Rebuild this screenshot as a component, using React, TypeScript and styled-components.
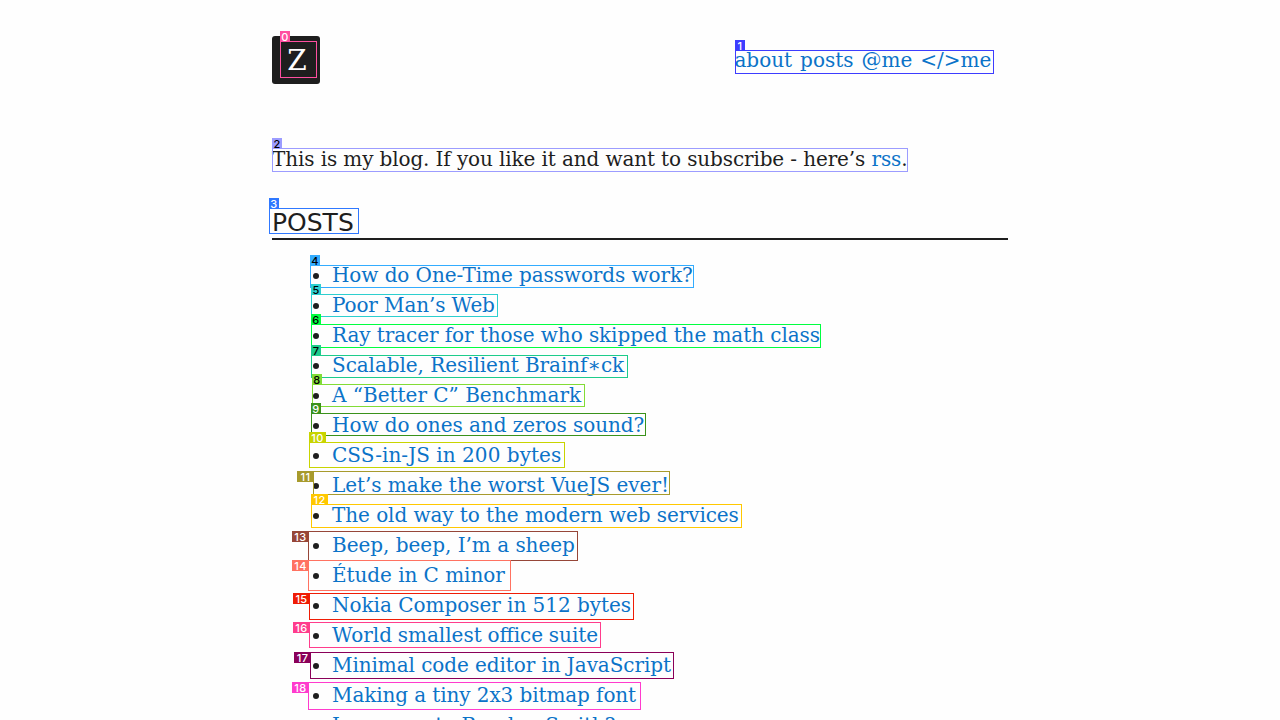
import React from "react";
import styled, { createGlobalStyle } from "styled-components";

const Global = createGlobalStyle`
  * { box-sizing: border-box; }
  html, body { margin: 0; height: 720px; overflow: hidden; background: #fefefe; }
  body {
    font: 20px/30px "DejaVu Serif", serif;
    color: #1e1e1e;
  }
`;

const Page = styled.main`
  position: relative;
  width: 1280px;
  height: 720px;
  overflow: hidden;
  padding: 36px 272px 0;
`;
const Header = styled.header`
  display: flex;
  justify-content: space-between;
  align-items: center;
  height: 48px;
`;
const Logo = styled.a`
  display: flex;
  align-items: center;
  justify-content: center;
  width: 48px;
  height: 48px;
  padding: 1px 0 0 2px;
  border-radius: 3px;
  background: #1e1e1e;
  color: #fefefe;
  font-size: 28px;
`;
const Nav = styled.nav`
  display: flex;
  gap: 8px;
  padding-right: 16.6px;
`;
const Link = styled.a`
  color: #0b73c8;
  text-decoration: none;
`;
const Intro = styled.p`
  margin: 60px 0 32px;
  letter-spacing: -0.121px;
`;
const Title = styled.h2`
  margin: 0;
  height: 34px;
  padding-top: 1px;
  border-bottom: 2px solid #1e1e1e;
  font: 400 25px/32px "DejaVu Sans", sans-serif;
`;
const Posts = styled.ul`
  margin: 20px 0 0;
  padding-left: 60px;
`;
const Post = styled.li<{ $track: number; $word?: number }>`
  height: 30px;
  white-space: nowrap;
  letter-spacing: ${(p) => (p.$track ? `${p.$track}px` : "normal")};
  word-spacing: ${(p) => p.$word ?? 0}px;
`;

const Outline = styled.div<{ $x: number; $y: number; $w: number; $h: number; $c: string }>`
  position: absolute;
  left: ${(p) => p.$x}px;
  top: ${(p) => p.$y}px;
  width: ${(p) => p.$w}px;
  height: ${(p) => p.$h}px;
  border: 1px solid ${(p) => p.$c};
`;
const Tag = styled.span<{ $x: number; $y: number; $w: number; $c: string; $dark?: boolean }>`
  position: absolute;
  left: ${(p) => p.$x}px;
  top: ${(p) => p.$y}px;
  width: ${(p) => p.$w}px;
  height: 11px;
  background: ${(p) => p.$c};
  color: ${(p) => (p.$dark ? "#000" : "#fff")};
  font: 500 11px/12px Inter, sans-serif;
  letter-spacing: 0.4px;
  text-align: center;
`;

// [title, letter spacing, word spacing]
const posts: [string, number, number?][] = [
  ["How do One-Time passwords work?", -0.08],
  ["Poor Man’s Web", -0.12],
  ["Ray tracer for those who skipped the math class", -0.075],
  ["Scalable, Resilient Brainf∗ck", -0.07],
  ["A “Better C” Benchmark", -0.01],
  ["How do ones and zeros sound?", -0.05],
  ["CSS-in-JS in 200 bytes", 0.04],
  ["Let’s make the worst VueJS ever!", -0.045],
  ["The old way to the modern web services", -0.07],
  ["Beep, beep, I’m a sheep", -0.02],
  ["Étude in C minor", -0.06],
  ["Nokia Composer in 512 bytes", -0.03],
  ["World smallest office suite", 0, -0.7],
  ["Minimal code editor in JavaScript", -0.08],
  ["Making a tiny 2x3 bitmap font", -0.1],
  ["Is anyone to Randen Smith?", -0.06],
];

// [box x, y, width, height, tag x, tag y, tag width, colour, dark text]
type Mark = [number, number, number, number, number, number, number, string, boolean];
const marks: Mark[] = [
  [280, 41, 37, 37, 280, 31, 10, "#ff4fa0", false],
  [735, 50, 259, 24, 735, 40, 10, "#3d3dff", false],
  [272, 148, 636, 24, 272, 138, 10, "#9c9cff", true],
  [269, 208, 90, 26, 269, 198, 10, "#2f78ff", false],
  [310, 265, 384, 23, 310, 255, 10, "#33acff", true],
  [311, 294, 187, 23, 311, 284, 10, "#2dcfcf", true],
  [311, 324, 510, 24, 311, 314, 10, "#00ff40", true],
  [311, 355, 317, 23, 311, 345, 10, "#1dcc8b", true],
  [312, 384, 273, 23, 312, 374, 10, "#82dc36", true],
  [311, 413, 335, 23, 311, 403, 10, "#3a921b", false],
  [309, 442, 256, 26, 309, 432, 17, "#c8d400", false],
  [313, 471, 357, 24, 297, 471, 17, "#a79a2c", false],
  [311, 504, 431, 24, 311, 494, 17, "#ffc800", false],
  [308, 531, 270, 30, 292, 531, 17, "#964638", false],
  [308, 560, 203, 31, 292, 560, 17, "#ff7261", false],
  [309, 593, 325, 27, 293, 593, 17, "#ef1c05", false],
  [309, 622, 292, 26, 293, 622, 17, "#ff3c8c", false],
  [310, 652, 364, 27, 294, 652, 17, "#8a0059", false],
  [308, 682, 333, 28, 292, 682, 17, "#ff3bcd", false],
];

export default function App() {
  return (
    <Page>
      <Global />
      <Header>
        <Logo>Z</Logo>
        <Nav>
          <Link>about</Link>
          <Link>posts</Link>
          <Link>@me</Link>
          <Link>&lt;/&gt;me</Link>
        </Nav>
      </Header>
      <Intro>
        This is my blog. If you like it and want to subscribe - here’s <Link>rss</Link>.
      </Intro>
      <Title>POSTS</Title>
      <Posts>
        {posts.map(([title, track, word]) => (
          <Post key={title} $track={track} $word={word}>
            <Link>{title}</Link>
          </Post>
        ))}
      </Posts>
      {marks.map(([x, y, w, h, tx, ty, tw, c, dark], i) => (
        <React.Fragment key={i}>
          <Outline $x={x} $y={y} $w={w} $h={h} $c={c} />
          <Tag $x={tx} $y={ty} $w={tw} $c={c} $dark={dark}>
            {i}
          </Tag>
        </React.Fragment>
      ))}
    </Page>
  );
}
